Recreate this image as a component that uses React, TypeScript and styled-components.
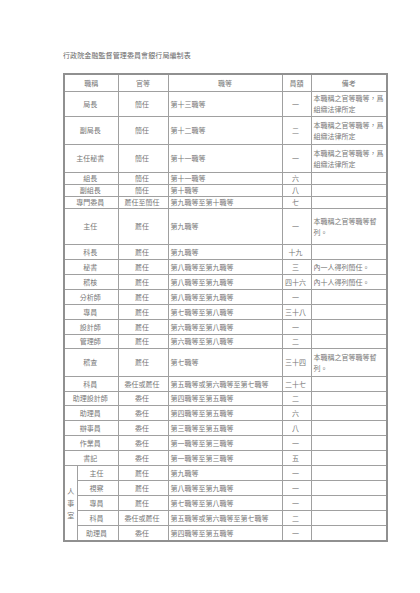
import styled, { createGlobalStyle } from "styled-components";

const GlobalStyle = createGlobalStyle`
  body {
    margin: 0;
    background: #ffffff;
  }
`;

type Row = {
  title: string;
  rank: string;
  grade: string;
  count: string;
  note?: string;
  h: number;
};

const FIXED_NOTE = "本職稱之官等職等，爲組織法律所定";
const TEMP_NOTE = "本職稱之官等職等暫列。";

// row heights are read off the printed sheet, borders not included
const mainRows: Row[] = [
  { title: "局長", rank: "簡任", grade: "第十三職等", count: "一", note: FIXED_NOTE, h: 24 },
  { title: "副局長", rank: "簡任", grade: "第十二職等", count: "二", note: FIXED_NOTE, h: 27 },
  { title: "主任秘書", rank: "簡任", grade: "第十一職等", count: "一", note: FIXED_NOTE, h: 27 },
  { title: "組長", rank: "簡任", grade: "第十一職等", count: "六", h: 11 },
  { title: "副組長", rank: "簡任", grade: "第十職等", count: "八", h: 11 },
  { title: "專門委員", rank: "薦任至簡任", grade: "第九職等至第十職等", count: "七", h: 11 },
  { title: "主任", rank: "薦任", grade: "第九職等", count: "一", note: TEMP_NOTE, h: 35 },
  { title: "科長", rank: "薦任", grade: "第九職等", count: "十九", h: 14 },
  { title: "秘書", rank: "薦任", grade: "第八職等至第九職等", count: "三", note: "內一人得列簡任。", h: 14 },
  { title: "稽核", rank: "薦任", grade: "第八職等至第九職等", count: "四十六", note: "內十人得列簡任。", h: 14 },
  { title: "分析師", rank: "薦任", grade: "第八職等至第九職等", count: "一", h: 14 },
  { title: "專員", rank: "薦任", grade: "第七職等至第八職等", count: "三十八", h: 14 },
  { title: "設計師", rank: "薦任", grade: "第六職等至第八職等", count: "一", h: 14 },
  { title: "管理師", rank: "薦任", grade: "第六職等至第八職等", count: "二", h: 13 },
  { title: "稽查", rank: "薦任", grade: "第七職等", count: "三十四", note: TEMP_NOTE, h: 27 },
  { title: "科員", rank: "委任或薦任", grade: "第五職等或第六職等至第七職等", count: "二十七", h: 14 },
  { title: "助理設計師", rank: "委任", grade: "第四職等至第五職等", count: "二", h: 13 },
  { title: "助理員", rank: "委任", grade: "第四職等至第五職等", count: "六", h: 14 },
  { title: "辦事員", rank: "委任", grade: "第三職等至第五職等", count: "八", h: 14 },
  { title: "作業員", rank: "委任", grade: "第一職等至第三職等", count: "一", h: 14 },
  { title: "書記", rank: "委任", grade: "第一職等至第三職等", count: "五", h: 14 },
];

const personnelRows: Row[] = [
  { title: "主任", rank: "薦任", grade: "第九職等", count: "一", h: 14 },
  { title: "視察", rank: "薦任", grade: "第八職等至第九職等", count: "一", h: 14 },
  { title: "專員", rank: "薦任", grade: "第七職等至第八職等", count: "一", h: 14 },
  { title: "科員", rank: "委任或薦任", grade: "第五職等或第六職等至第七職等", count: "二", h: 14 },
  { title: "助理員", rank: "委任", grade: "第四職等至第五職等", count: "一", h: 14 },
];

const App = () => {
  return (
    <>
      <GlobalStyle />
      <Page>
        <Title>行政院金融監督管理委員會銀行局編制表</Title>
        <Sheet>
          <colgroup>
            <col style={{ width: 13 }} />
            <col style={{ width: 41 }} />
            <col style={{ width: 50 }} />
            <col style={{ width: 114 }} />
            <col style={{ width: 29 }} />
            <col style={{ width: 76 }} />
          </colgroup>
          <thead>
            <tr>
              <HeadCell colSpan={2}>職稱</HeadCell>
              <HeadCell>官等</HeadCell>
              <HeadCell>職等</HeadCell>
              <HeadCell>員額</HeadCell>
              <HeadCell>備考</HeadCell>
            </tr>
          </thead>
          <tbody>
            {mainRows.map((r, i) => (
              <tr key={i}>
                <Cell $h={r.h} colSpan={2} $align="center">{r.title}</Cell>
                <Cell $h={r.h} $align="center">{r.rank}</Cell>
                <Cell $h={r.h} $align="left">{r.grade}</Cell>
                <Cell $h={r.h} $align="center">{r.count}</Cell>
                <Cell $h={r.h} $align="left">{r.note}</Cell>
              </tr>
            ))}
            {personnelRows.map((r, i) => (
              <tr key={"p" + i}>
                {i === 0 && (
                  <GroupCell rowSpan={personnelRows.length}>人事室</GroupCell>
                )}
                <Cell $h={r.h} $align="center">{r.title}</Cell>
                <Cell $h={r.h} $align="center">{r.rank}</Cell>
                <Cell $h={r.h} $align="left">{r.grade}</Cell>
                <Cell $h={r.h} $align="center">{r.count}</Cell>
                <Cell $h={r.h} $align="left">{r.note}</Cell>
              </tr>
            ))}
          </tbody>
        </Sheet>
      </Page>
    </>
  );
};

export default App;

const Page = styled.div`
  padding: 50px 0 40px 63px;
  font-family: "Noto Sans CJK TC", "Noto Sans CJK SC", sans-serif;
  color: #777;
`;

const Title = styled.div`
  font-size: 7px;
  line-height: 10px;
  color: #666;
  letter-spacing: 0.1px;
`;

const Sheet = styled.table`
  margin-top: 13px;
  width: 323px;
  table-layout: fixed;
  border-collapse: collapse;
  border: 2px solid #909090;
  font-size: 7px;
  line-height: 11px;
`;

const HeadCell = styled.th`
  height: 16px;
  padding: 0;
  font-weight: normal;
  text-align: center;
  border: 1px solid #a0a0a0;
  color: #777;
`;

const Cell = styled.td<{ $h: number; $align: "left" | "center" }>`
  height: ${(p) => p.$h}px;
  padding: 0 2px 0 ${(p) => (p.$align === "left" ? 2 : 0)}px;
  text-align: ${(p) => p.$align};
  vertical-align: middle;
  border: 1px solid #a0a0a0;
  color: #777;
  word-break: break-all;
`;

const GroupCell = styled.td`
  padding: 0;
  line-height: 12px;
  text-align: center;
  vertical-align: middle;
  border: 1px solid #a0a0a0;
  color: #777;
  word-break: break-all;
`;
